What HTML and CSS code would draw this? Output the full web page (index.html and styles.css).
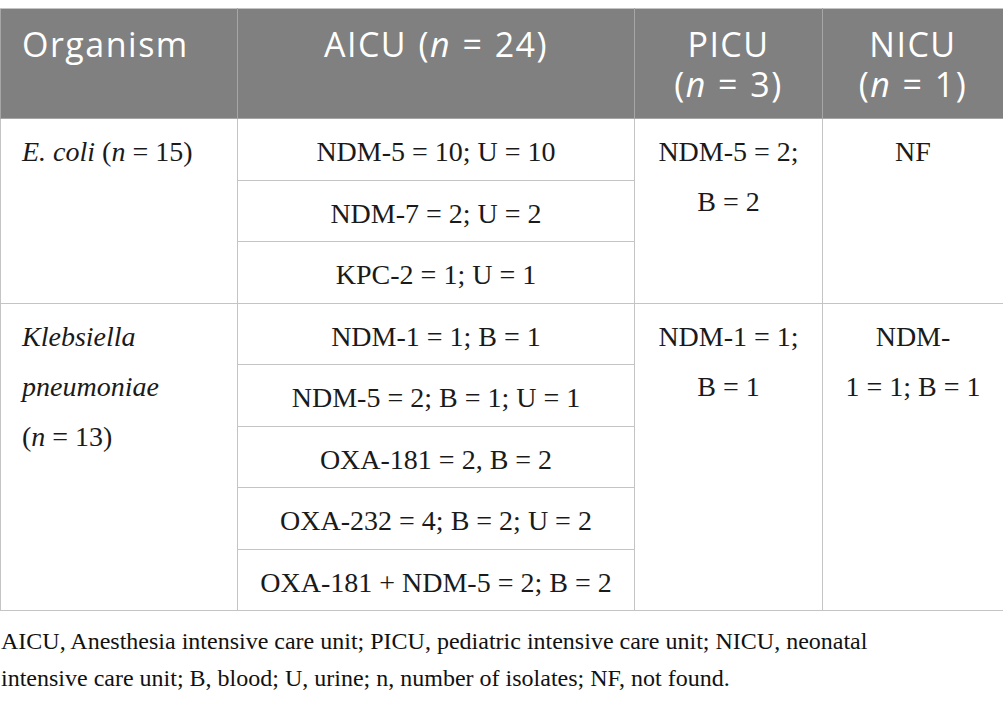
FILE: index.html
```html
<!DOCTYPE html>
<html lang="en">
<head>
<meta charset="utf-8">
<title>Carbapenemase genes by ward</title>
<link rel="stylesheet" href="styles.css">
</head>
<body>
<table class="genes">
    <colgroup>
        <col class="c-org">
        <col class="c-aicu">
        <col class="c-picu">
        <col class="c-nicu">
    </colgroup>
    <thead>
        <tr>
            <th class="left">Organism</th>
            <th>AICU (<i>n</i> = 24)</th>
            <th>PICU<br>(<i>n</i> = 3)</th>
            <th>NICU<br>(<i>n</i> = 1)</th>
        </tr>
    </thead>
    <tbody>
        <tr>
            <td class="left" rowspan="3"><i>E. coli</i> (<i>n</i> = 15)</td>
            <td>NDM-5 = 10; U = 10</td>
            <td rowspan="3">NDM-5 = 2;<br>B = 2</td>
            <td rowspan="3">NF</td>
        </tr>
        <tr><td>NDM-7 = 2; U = 2</td></tr>
        <tr><td>KPC-2 = 1; U = 1</td></tr>
        <tr>
            <td class="left" rowspan="5"><i>Klebsiella<br>pneumoniae</i><br>(<i>n</i> = 13)</td>
            <td>NDM-1 = 1; B = 1</td>
            <td rowspan="5">NDM-1 = 1;<br>B = 1</td>
            <td rowspan="5">NDM-<br>1 = 1; B = 1</td>
        </tr>
        <tr><td>NDM-5 = 2; B = 1; U = 1</td></tr>
        <tr><td>OXA-181 = 2, B = 2</td></tr>
        <tr><td>OXA-232 = 4; B = 2; U = 2</td></tr>
        <tr><td>OXA-181 + NDM-5 = 2; B = 2</td></tr>
    </tbody>
</table>
<p class="note">AICU, Anesthesia intensive care unit; PICU, pediatric intensive care unit; NICU, neonatal intensive care unit; B, blood; U, urine; n, number of isolates; NF, not found.</p>
</body>
</html>
```

FILE: styles.css
```css
body {
    margin: 0;
    padding-top: 8px;
    background: #ffffff;
    color: #1a1a1a;
    font-family: "Liberation Serif", "Times New Roman", serif;
}
table.genes {
    width: 1003px;
    border-collapse: collapse;
    table-layout: fixed;
}
col.c-org { width: 237px; }
col.c-aicu { width: 397px; }
col.c-picu { width: 188px; }
col.c-nicu { width: 181px; }
table.genes th,
table.genes td {
    border: 1px solid #c4c4c4;
    text-align: center;
    vertical-align: top;
}
table.genes th {
    background-color: #808080;
    color: #ffffff;
    font-family: "Open Sans", "Liberation Sans", sans-serif;
    font-weight: normal;
    font-size: 34px;
    letter-spacing: 1.5px;
    word-spacing: 1px;
    line-height: 40px;
    padding: 15px 10px 14px;
    border-color: #a6a6a6;
    border-top-color: #c4c4c4;
}
table.genes td {
    font-size: 28px;
    line-height: 50px;
    padding: 8px 10px 2.5px;
}
table.genes .left {
    text-align: left;
    padding-left: 21px;
}
.note {
    margin: 12px 0 0 1px;
    max-width: 900px;
    font-size: 24px;
    line-height: 37px;
    color: #111111;
}
```
